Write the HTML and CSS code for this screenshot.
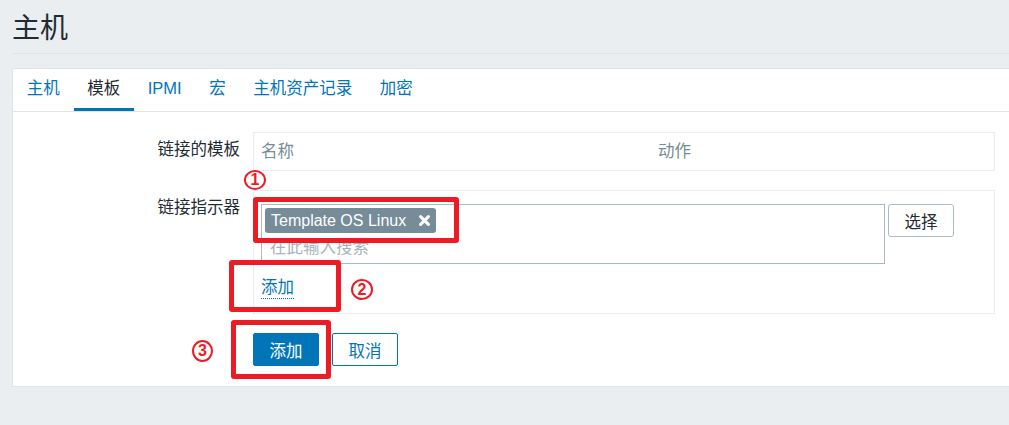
FILE: index.html
```html
<!DOCTYPE html>
<html lang="zh-CN">
<head>
<meta charset="utf-8">
<title>主机</title>
<link rel="stylesheet" href="styles.css">
</head>
<body>
<header class="page-header"><h1>主机</h1></header>
<main class="panel">
  <nav class="tabs">
    <a class="tab">主机</a>
    <a class="tab active">模板</a>
    <a class="tab">IPMI</a>
    <a class="tab">宏</a>
    <a class="tab">主机资产记录</a>
    <a class="tab">加密</a>
  </nav>
  <div class="form">
    <div class="row">
      <div class="label">链接的模板</div>
      <div class="field table-box">
        <div class="thead"><span>名称</span><span>动作</span></div>
      </div>
    </div>
    <div class="row">
      <div class="label">链接指示器</div>
      <div class="field group-box">
        <div class="ms-line">
          <div class="multiselect">
            <div class="tags">
              <span class="tag">Template OS Linux<svg class="tag-x" width="11" height="11" viewBox="0 0 11 11"><path d="M1.6 1.6 L9.4 9.4 M9.4 1.6 L1.6 9.4" stroke="#fff" stroke-width="3" stroke-linecap="round"/></svg></span>
            </div>
            <div class="placeholder">在此输入搜索</div>
          </div>
          <button class="btn-alt">选择</button>
        </div>
        <a class="link-add">添加</a>
      </div>
    </div>
    <div class="row">
      <div class="label"></div>
      <div class="btns">
        <button class="btn-primary">添加</button>
        <button class="btn-outline">取消</button>
      </div>
    </div>
  </div>
</main>
<div class="annot box1"></div>
<div class="annot box2"></div>
<div class="annot box3"></div>
<div class="num num1">1</div>
<div class="num num2">2</div>
<div class="num num3">3</div>
</body>
</html>
```
FILE: styles.css
```css
html, body {
  margin: 0;
  padding: 0;
}
body {
  background: #ebeef0;
  font-family: "Liberation Sans", "Noto Sans CJK SC", sans-serif;
  font-size: 16.5px;
  color: #1f2c33;
  position: relative;
  height: 425px;
  overflow: hidden;
}
.page-header {
  margin-left: 12px;
  height: 53px;
  border-bottom: 1px solid #dfe4e7;
}
.page-header h1 {
  margin: 0;
  padding-top: 11px;
  font-size: 28px;
  line-height: 36px;
  font-weight: normal;
  color: #1f2c33;
}
.panel {
  display: block;
  margin: 14px 0 0 12px;
  background: #fff;
  border: 1px solid #dfe4e7;
  border-right: none;
}
.tabs {
  display: flex;
  border-bottom: 1px solid #dfe4e7;
}
.tab {
  display: block;
  height: 42px;
  line-height: 39px;
  padding: 0 13.75px;
  box-sizing: border-box;
  border-bottom: 3px solid transparent;
  color: #0275b8;
}
.tab.active {
  color: #1f2c33;
  border-bottom-color: #0275b8;
}
.form {
  padding: 20px 0 20px 0;
  display: flex;
  flex-direction: column;
  gap: 19px;
}
.row {
  display: flex;
  gap: 13px;
}
.label {
  width: 227px;
  flex: none;
  text-align: right;
  line-height: 24px;
  padding-top: 5px;
  color: #1f2c33;
}
.field {
  width: 742px;
  box-sizing: border-box;
  border: 1px solid #ebeef0;
}
.table-box {
  height: 39px;
}
.thead {
  display: grid;
  grid-template-columns: 397px 1fr;
  line-height: 37px;
  color: #768d99;
}
.thead span {
  padding-left: 7px;
}
.group-box {
  padding: 13px 7px 14px 7px;
}
.ms-line {
  display: flex;
  align-items: flex-start;
  gap: 3px;
}
.multiselect {
  width: 624px;
  height: 60px;
  box-sizing: border-box;
  border: 1px solid #acbbc2;
  padding: 3px;
}
.tags {
  display: flex;
  height: 25px;
}
.tag {
  display: flex;
  align-items: center;
  height: 25px;
  box-sizing: border-box;
  padding: 0 6px;
  gap: 13px;
  background: #768d99;
  color: #fff;
  border-radius: 3px;
  font-size: 16px;
}
.tag-x {
  flex: none;
}
.placeholder {
  margin-top: 2px;
  padding-left: 5px;
  line-height: 24px;
  color: #a7b4bb;
}
.btn-alt {
  width: 66px;
  height: 33px;
  background: #fff;
  border: 1px solid #acbbc2;
  border-radius: 3px;
  color: #1f2c33;
  font-family: inherit;
  font-size: 16.5px;
  padding: 0;
}
.link-add {
  display: inline-block;
  margin-top: 12px;
  line-height: 22px;
  color: #0275b8;
  border-bottom: 1px dotted #0275b8;
}
.btns {
  display: flex;
  gap: 13px;
}
.btns button {
  width: 66px;
  height: 33px;
  border-radius: 2px;
  font-family: inherit;
  font-size: 16.5px;
  padding: 0;
}
.btn-primary {
  background: #0275b8;
  border: 1px solid #0275b8;
  color: #fff;
}
.btn-outline {
  background: #fff;
  border: 1px solid #0275b8;
  color: #0275b8;
}
.annot {
  position: absolute;
  box-sizing: border-box;
  border: 5px solid #ed1c24;
  border-radius: 3px;
}
.box1 { left: 253px; top: 197px; width: 206px; height: 46px; }
.box2 { left: 229px; top: 260px; width: 112px; height: 52px; }
.box3 { left: 231px; top: 320px; width: 100px; height: 59px; }
.num {
  position: absolute;
  box-sizing: border-box;
  border: 2.5px solid #ed1c24;
  border-radius: 50%;
  color: #ed1c24;
  font-weight: bold;
  font-size: 16px;
  display: flex;
  align-items: center;
  justify-content: center;
  font-family: "Liberation Sans", sans-serif;
}
.num1 { left: 244px; top: 170px; width: 22px; height: 20px; }
.num2 { left: 351px; top: 279px; width: 22px; height: 21px; }
.num3 { left: 192px; top: 340px; width: 21px; height: 22px; }
```
